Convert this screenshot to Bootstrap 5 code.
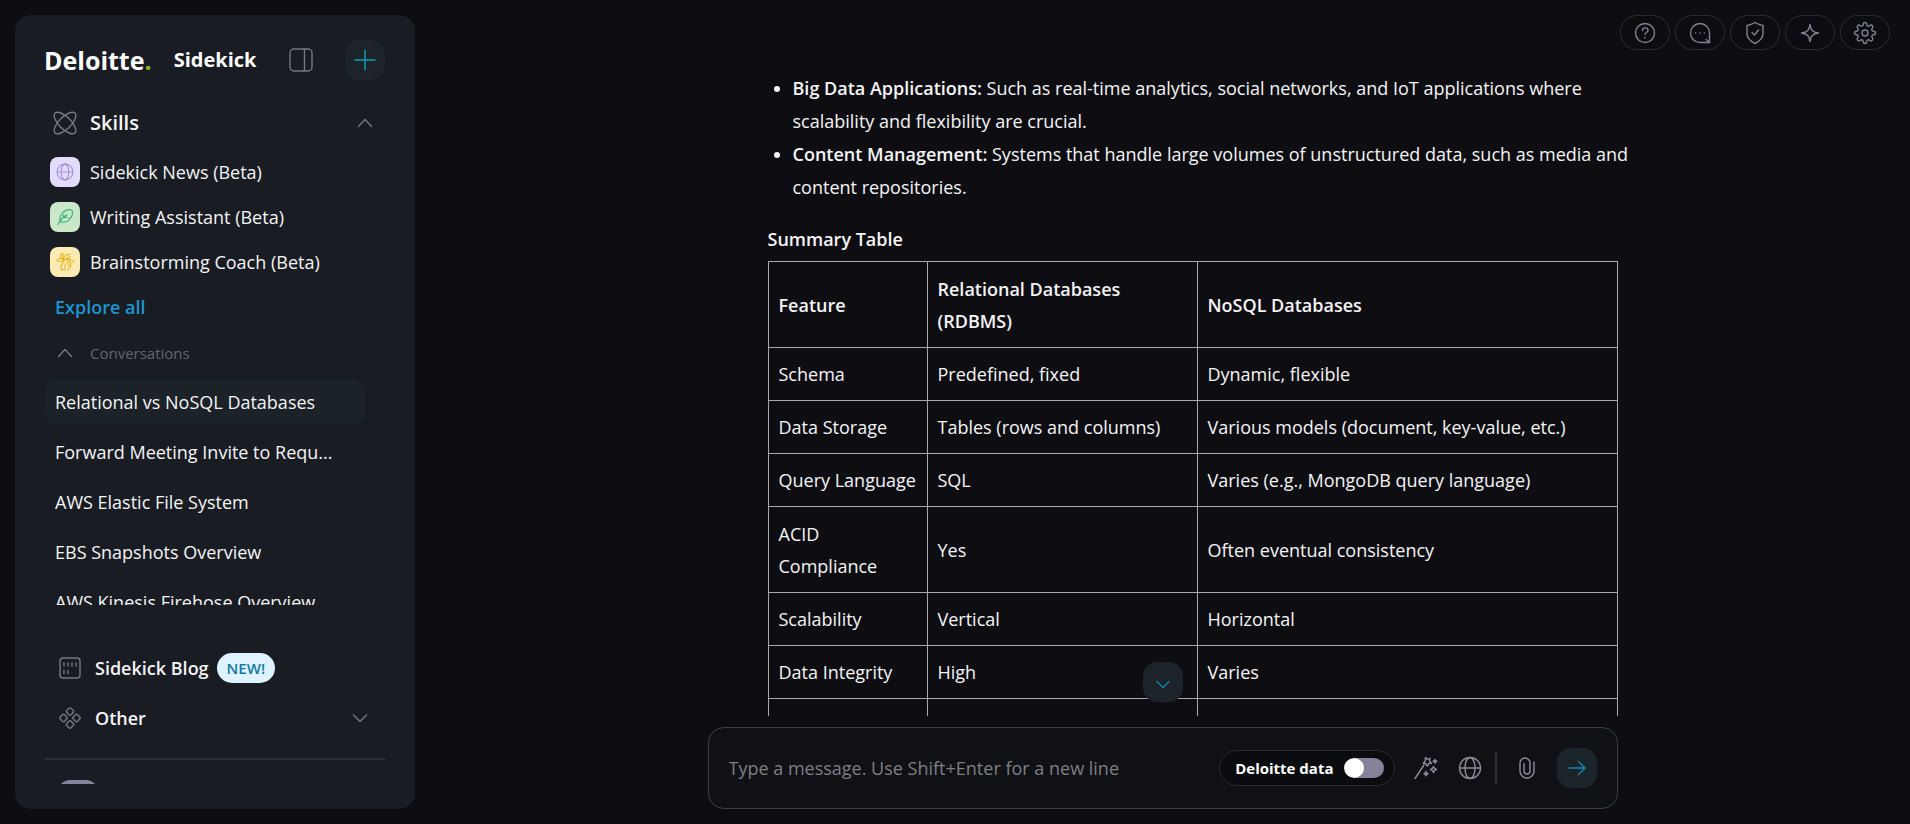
<!DOCTYPE html>
<html lang="en" data-bs-theme="dark">
<head>
<meta charset="utf-8">
<meta name="viewport" content="width=device-width, initial-scale=1">
<title>Sidekick</title>
<link href="https://cdn.jsdelivr.net/npm/bootstrap@5.3.0/dist/css/bootstrap.min.css" rel="stylesheet">
<style>
  :root { --line: #a9a9ad; --accent: #0f86ad; --soft: #1c2329; }
  body { background: #0e0e12; color: #f4f4f6; font-family: "Open Sans", sans-serif; font-size: 18px; line-height: 32px; }
  svg { fill: none; stroke: currentColor; stroke-width: 1.4; stroke-linecap: round; stroke-linejoin: round; display: block; flex: none; }
  a { color: inherit; text-decoration: none; }
  button { background: none; border: 0; padding: 0; color: inherit; }
  .sidebar { width: 400px; margin: 15px 0 15px 15px; padding-bottom: 25px; background: #191c22; border-radius: 16px; }
  .side-head { height: 90px; padding: 0 30px 0 29px; }
  .logo { font-size: 25px; font-weight: 700; color: #fff; }
  .logo span { color: #86bc25; }
  .product { font-size: 20px; font-weight: 700; color: #fff; margin-left: 22px; }
  .icon-muted { color: #777784; }
  .sq-btn { width: 40px; height: 40px; border-radius: 14px; background: var(--soft); color: #10a0b4; }
  .skills-head { height: 36px; padding: 0 40px 0 38px; gap: 13px; font-size: 20px; font-weight: 600; margin-bottom: 8px; }
  .skill { height: 45px; padding-left: 35px; gap: 10px; }
  .tile { width: 30px; height: 30px; border-radius: 8px; }
  .tile-news { background: #e3dcfd; color: #a78be0; }
  .tile-write { background: #c9e7c9; color: #2fb078; }
  .tile-brain { background: #fdebb3; color: #edb21c; }
  .explore { height: 46px; padding-left: 40px; color: #1b96cf; font-weight: 600; }
  .conv-head { height: 46px; margin-bottom: 1px; padding-left: 40px; gap: 15px; font-size: 15px; color: #646471; }
  .conv-list { margin: 0 50px 0 30px; min-height: 0; }
  .conv { height: 50px; padding: 2px 0; }
  .conv a { height: 46px; padding: 0 10px; border-radius: 12px; }
  .conv a.active { background: #1b2228; }
  .side-foot { margin-top: 38px; padding: 0 30px; }
  .foot-row { height: 50px; padding: 0 15px 0 14px; gap: 14px; font-weight: 600; }
  .new-pill { height: 30px; margin-left: -6px; padding: 0 10px; border-radius: 15px; background: #dff2ff; color: #107ba6; font-size: 15px; line-height: 30px; }
  .rule { height: 2px; margin: 15px 0 20px; background: #2c2e38; }
  .avatar-clip { height: 4px; margin-left: 13px; overflow: hidden; }
  .avatar { width: 40px; height: 40px; border-radius: 12px; background: #85839b; }
  .topbar { height: 50px; padding: 15px 20px 0 0; gap: 5px; }
  .top-btn { width: 50px; height: 35px; border: 1px solid #2b2b31; border-radius: 18px; background: #0b0d11; color: #7f8290; }
  .thread { min-height: 0; overflow: hidden; }
  .thread-body { width: 910px; max-width: 100%; padding: 22px 0 0 60px; }
  .thread-body ul { padding-left: 25px; margin: 0 -12px 19px 0; line-height: 33px; }
  .thread-body strong { font-weight: 600; }
  .summary { width: 100%; margin-top: 6px; border-collapse: collapse; }
  .summary th, .summary td { border: 1px solid var(--line); padding: 10px; vertical-align: middle; font-weight: 400; }
  .summary thead th { font-weight: 600; height: 86px; }
  .summary tr.tall > * { height: 86px; }
  .c1 { width: 159px; }
  .c2 { width: 270px; }
  .to-end { bottom: 14px; color: var(--accent); }
  .composer { width: 910px; max-width: 100%; height: 82px; margin: 11px 0 15px; padding: 0 20px; border: 1px solid #3a4144; border-radius: 16px; background: #101115; }
  .composer input[type=text] { background: none; border: 0; outline: 0; color: #f4f4f6; padding: 0; min-width: 0; }
  .composer input::placeholder { color: #7d7f84; opacity: 1; }
  .data-pill { height: 36px; padding: 0 10px 0 15px; border: 1px solid #292a30; border-radius: 18px; background: #0b0c10; color: #fff; font-size: 15px; font-weight: 700; gap: 10px; }
  .data-pill .form-check-input { width: 40px; height: 20px; margin: 0; border: 0; box-shadow: none; background-color: #85839b; background-image: url("data:image/svg+xml,%3csvg xmlns='http://www.w3.org/2000/svg' viewBox='-4 -4 8 8'%3e%3ccircle r='4' fill='%23fff'/%3e%3c/svg%3e"); }
  .tools { color: #8b8c99; padding: 0 19px 0 18px; gap: 19px; }
  .vr-line { width: 2px; height: 32px; margin-left: -6px; background: #2f3037; }
  .sq-btn.send { color: #1287b2; background: #1b242a; }
</style>
</head>
<body>
<div class="d-flex vh-100 overflow-hidden">
  <aside class="sidebar d-flex flex-column flex-shrink-0">
    <header class="side-head d-flex align-items-center flex-shrink-0">
      <a href="#" class="logo">Deloitte<span>.</span></a>
      <span class="product">Sidekick</span>
      <button type="button" class="icon-muted ms-auto" aria-label="Toggle sidebar">
        <svg width="24" height="24" viewBox="0 0 24 24"><rect x="1" y="1" width="22" height="22" rx="4"/><path d="M15.500 1v22"/></svg>
      </button>
      <button type="button" class="sq-btn d-flex align-items-center justify-content-center ms-auto" aria-label="New chat">
        <svg width="22" height="22" viewBox="0 0 22 22"><path d="M11 1v20M1 11h20"/></svg>
      </button>
    </header>

    <button type="button" class="skills-head d-flex align-items-center flex-shrink-0">
      <svg class="icon-muted" width="24" height="24" viewBox="0 0 24 24"><ellipse cx="12" cy="12" rx="14" ry="6" transform="rotate(45 12 12)"/><ellipse cx="12" cy="12" rx="14" ry="6" transform="rotate(-45 12 12)"/></svg>
      Skills
      <svg class="icon-muted ms-auto" width="20" height="20" viewBox="0 0 20 20"><path d="M3.500 13.500l6.500-7 6.500 7"/></svg>
    </button>

    <a href="#" class="skill d-flex align-items-center flex-shrink-0">
      <span class="tile tile-news d-flex align-items-center justify-content-center"><svg width="18" height="18" viewBox="0 0 24 24"><circle cx="12" cy="12" r="10.500"/><ellipse cx="12" cy="12" rx="5" ry="10.500"/><path d="M1.500 12h21"/></svg></span>
      Sidekick News (Beta)
    </a>
    <a href="#" class="skill d-flex align-items-center flex-shrink-0">
      <span class="tile tile-write d-flex align-items-center justify-content-center"><svg width="18" height="18" viewBox="0 0 24 24"><path d="M2.500 22.500C4 18 8 13.500 14.500 9M5.500 18C3.500 11 9 3.500 17.500 2c3.500 0 4.500 1 4.500 4 0 3-.5 5-2 7l-3 .5 1.500 1.500C15.500 18.500 11 20 5.500 18M10 12.500V9M10.500 12.500h4"/></svg></span>
      Writing Assistant (Beta)
    </a>
    <a href="#" class="skill d-flex align-items-center flex-shrink-0">
      <span class="tile tile-brain d-flex align-items-center justify-content-center"><svg width="19" height="19" viewBox="0 0 24 24"><path d="M8 23c-2-1-2-4-1-7 1-3 4-3 3-7-1 2-3 3-6 3M9 9C6 7 3 8 1 11.500M9 9C5 7 5 3 7.500 1.500 10 3 10 5 9 9c1-4 4-6 9-6.500M9 9c5-1 11 0 13.500 4M9 9c6 0 9 1 9.500 5v4c-1 2-3 1-3 4.500M8 22.500h5M14 12c1 3 1 5 4 6M11.500 16v4M14 8l4-2.500"/></svg></span>
      Brainstorming Coach (Beta)
    </a>
    <a href="#" class="explore d-flex align-items-center flex-shrink-0">Explore all</a>

    <button type="button" class="conv-head d-flex align-items-center flex-shrink-0">
      <svg class="icon-muted" width="20" height="20" viewBox="0 0 20 20"><path d="M3.500 13.500l6.500-7 6.500 7"/></svg>
      Conversations
    </button>
    <nav class="conv-list flex-fill overflow-hidden">
      <div class="conv"><a href="#" class="active d-flex align-items-center">Relational vs NoSQL Databases</a></div>
      <div class="conv"><a href="#" class="d-flex align-items-center">Forward Meeting Invite to Requ...</a></div>
      <div class="conv"><a href="#" class="d-flex align-items-center">AWS Elastic File System</a></div>
      <div class="conv"><a href="#" class="d-flex align-items-center">EBS Snapshots Overview</a></div>
      <div class="conv"><a href="#" class="d-flex align-items-center">AWS Kinesis Firehose Overview</a></div>
    </nav>

    <footer class="side-foot flex-shrink-0">
      <a href="#" class="foot-row d-flex align-items-center">
        <svg class="icon-muted" width="22" height="22" viewBox="0 0 22 22"><rect x="1" y="1" width="20" height="20" rx="3"/><path d="M5 6v3M9 6v3M13 6v3M17 6v3M5 13.500v3M9 13.500v3"/></svg>
        Sidekick Blog <span class="new-pill">NEW!</span>
      </a>
      <button type="button" class="foot-row d-flex align-items-center w-100">
        <svg class="icon-muted" width="22" height="22" viewBox="0 0 22 22"><rect x="8" y="1.500" width="6" height="6" rx="1.500" transform="rotate(45 11 4.500)"/><rect x="8" y="14.500" width="6" height="6" rx="1.500" transform="rotate(45 11 17.500)"/><rect x="1.500" y="8" width="6" height="6" rx="1.500" transform="rotate(45 4.500 11)"/><rect x="14.500" y="8" width="6" height="6" rx="1.500" transform="rotate(45 17.500 11)"/></svg>
        Other
        <svg class="icon-muted ms-auto" width="20" height="20" viewBox="0 0 20 20"><path d="M3.500 7l6.500 6.500L16.500 7"/></svg>
      </button>
      <div class="rule"></div>
      <div class="avatar-clip"><div class="avatar"></div></div>
    </footer>
  </aside>

  <main class="d-flex flex-column align-items-center flex-fill">
    <div class="topbar d-flex justify-content-end align-self-stretch flex-shrink-0">
      <button type="button" class="top-btn d-flex align-items-center justify-content-center" aria-label="Help"><svg width="22" height="22" viewBox="0 0 22 22"><circle cx="11" cy="11" r="9.500"/><path d="M8.500 8.500c0-3.500 5.500-3.500 5.500 0 0 2-3 2-3 4M11 15.500v.5"/></svg></button>
      <button type="button" class="top-btn d-flex align-items-center justify-content-center" aria-label="Feedback"><svg width="22" height="22" viewBox="0 0 22 22"><path d="M20.500 20.500H11A9.500 9.500 0 1 1 20.500 11zM20.500 20.500L17 17.500M6.500 11h.2M10.900 11h.2M15.200 11h.2"/></svg></button>
      <button type="button" class="top-btn d-flex align-items-center justify-content-center" aria-label="Privacy"><svg width="22" height="24" viewBox="0 0 22 24"><path d="M11 1.500c2.500 1.500 5 2.500 8 3v8c0 4-4 8-8 10-4-2-8-6-8-10v-8c3-.5 5.500-1.500 8-3zM8 11.500l2.500 2.500 4-5"/></svg></button>
      <button type="button" class="top-btn d-flex align-items-center justify-content-center" aria-label="What's new"><svg width="20" height="20" viewBox="0 0 20 20"><path d="M10 1.500c1 5.500 2 7.500 8.500 8.500-6.500 1-7.500 3-8.500 8.500-1-5.500-2-7.500-8.500-8.500C8 9 9 7 10 1.500z"/></svg></button>
      <button type="button" class="top-btn d-flex align-items-center justify-content-center" aria-label="Settings"><svg width="24" height="24" viewBox="0 0 24 24"><circle cx="12" cy="12" r="3"/><path d="M10.200 3.600C10.400.8 13.600.8 13.800 3.600c.2 1.500 1.500 1.900 2.700 1.200 2.200-1.800 4.500.5 2.700 2.700-.8 1.200-.3 2.500 1.200 2.700 2.800.2 2.800 3.400 0 3.600-1.500.2-2 1.500-1.200 2.700 1.800 2.200-.5 4.500-2.700 2.700-1.200-.8-2.500-.3-2.700 1.200-.2 2.800-3.400 2.800-3.600 0-.2-1.500-1.500-2-2.700-1.200-2.200 1.800-4.500-.5-2.700-2.700.8-1.200.3-2.500-1.200-2.700-2.800-.2-2.800-3.400 0-3.600 1.500-.2 2-1.500 1.200-2.700C3 5.300 5.300 3 7.500 4.800c1.200.7 2.500.3 2.700-1.200z"/></svg></button>
    </div>

    <div class="thread position-relative flex-fill align-self-stretch">
      <div class="thread-body mx-auto">
        <ul>
          <li><strong>Big Data Applications:</strong> Such as real-time analytics, social networks, and IoT applications where scalability and flexibility are crucial.</li>
          <li><strong>Content Management:</strong> Systems that handle large volumes of unstructured data, such as media and content repositories.</li>
        </ul>
        <strong>Summary Table</strong>
        <table class="summary">
          <thead>
            <tr><th class="c1" scope="col">Feature</th><th class="c2" scope="col">Relational Databases (RDBMS)</th><th scope="col">NoSQL Databases</th></tr>
          </thead>
          <tbody>
            <tr><td>Schema</td><td>Predefined, fixed</td><td>Dynamic, flexible</td></tr>
            <tr><td>Data Storage</td><td>Tables (rows and columns)</td><td>Various models (document, key-value, etc.)</td></tr>
            <tr><td>Query Language</td><td>SQL</td><td>Varies (e.g., MongoDB query language)</td></tr>
            <tr class="tall"><td>ACID Compliance</td><td>Yes</td><td>Often eventual consistency</td></tr>
            <tr><td>Scalability</td><td>Vertical</td><td>Horizontal</td></tr>
            <tr><td>Data Integrity</td><td>High</td><td>Varies</td></tr>
            <tr class="tall"><td></td><td></td><td></td></tr>
          </tbody>
        </table>
      </div>
      <button type="button" class="to-end sq-btn position-absolute start-50 translate-middle-x d-flex align-items-center justify-content-center" aria-label="Scroll to bottom"><svg width="20" height="20" viewBox="0 0 20 20"><path d="M4 9.500l6 6 6-6"/></svg></button>
    </div>

    <form class="composer d-flex align-items-center flex-shrink-0">
      <input type="text" class="flex-fill" aria-label="Message" placeholder="Type a message. Use Shift+Enter for a new line">
      <label class="data-pill d-flex align-items-center form-switch flex-shrink-0">Deloitte data <input class="form-check-input float-none" type="checkbox" role="switch"></label>
      <div class="tools d-flex align-items-center">
        <button type="button" aria-label="Prompt ideas"><svg width="26" height="24" viewBox="0 0 26 24"><path d="M2 22.500L11 9M12.500 1.500l1.800 1.800 2.700-1-.5 2.900 2 2-2.800.4-1.400 2.600-1.300-2.600-2.800-.4 2-2zM22 3.500c.3 1.200.6 1.500 1.800 1.800-1.200.3-1.500.6-1.800 1.800-.3-1.200-.6-1.500-1.800-1.800 1.200-.3 1.500-.6 1.800-1.800zM20.500 10.500c.4 2 1 2.600 3 3-2 .4-2.600 1-3 3-.4-2-1-2.600-3-3 2-.4 2.600-1 3-3zM13 15.500c.3 1.500.7 2 2 2.200-1.300.3-1.700.7-2 2.200-.3-1.500-.7-1.900-2-2.200 1.300-.2 1.700-.7 2-2.200z"/></svg></button>
        <button type="button" aria-label="Web search"><svg width="24" height="24" viewBox="0 0 24 24"><circle cx="12" cy="12" r="10.500"/><ellipse cx="12" cy="12" rx="5" ry="10.500"/><path d="M1.500 12h21"/></svg></button>
        <span class="vr-line"></span>
        <button type="button" aria-label="Attach file"><svg width="22" height="22" viewBox="0 0 22 22"><path d="M18 5v9a7 7 0 0 1-14 0V6a5 5 0 0 1 10 0v8a3 3 0 0 1-6 0V6.500"/></svg></button>
      </div>
      <button type="submit" class="sq-btn send d-flex align-items-center justify-content-center" aria-label="Send"><svg width="18" height="18" viewBox="0 0 18 18"><path d="M1 9h16M10.500 2.500L17 9l-6.500 6.500"/></svg></button>
    </form>
  </main>
</div>
<script src="https://cdn.jsdelivr.net/npm/bootstrap@5.3.0/dist/js/bootstrap.bundle.min.js"></script>
</body>
</html>
